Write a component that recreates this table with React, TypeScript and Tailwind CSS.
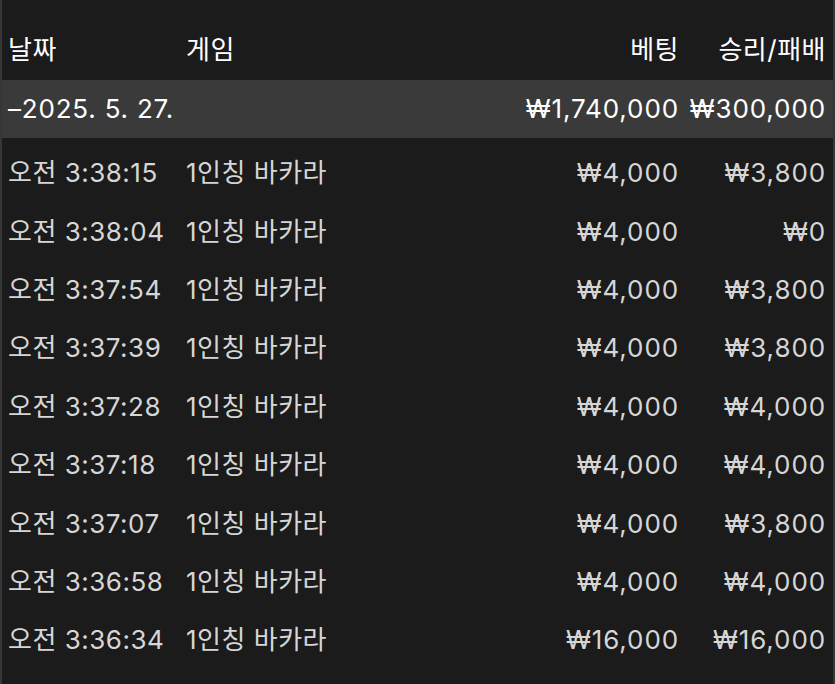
const rows = [
  { time: "오전 3:38:15", bet: "₩4,000", win: "₩3,800" },
  { time: "오전 3:38:04", bet: "₩4,000", win: "₩0" },
  { time: "오전 3:37:54", bet: "₩4,000", win: "₩3,800" },
  { time: "오전 3:37:39", bet: "₩4,000", win: "₩3,800" },
  { time: "오전 3:37:28", bet: "₩4,000", win: "₩4,000" },
  { time: "오전 3:37:18", bet: "₩4,000", win: "₩4,000" },
  { time: "오전 3:37:07", bet: "₩4,000", win: "₩3,800" },
  { time: "오전 3:36:58", bet: "₩4,000", win: "₩4,000" },
  { time: "오전 3:36:34", bet: "₩16,000", win: "₩16,000" },
];

const grid = "grid grid-cols-[178px_1fr_200px_147px] items-center pl-[6px] pr-[7px]";

export default function App() {
  return (
    <div
      className="flex h-[684px] w-[835px] overflow-hidden bg-[#1b1b1b] text-[26px] leading-none tracking-[0.5px]"
      style={{ fontFamily: 'Inter, "Noto Sans CJK KR", sans-serif' }}
    >
      <div className="w-[2px] shrink-0 bg-[#363636]" />
      <div className="flex-1 pt-5">
        <div className={`${grid} h-[60px] text-white`}>
          <span>날짜</span>
          <span>게임</span>
          <span className="text-right">베팅</span>
          <span className="text-right">승리/패배</span>
        </div>
        <div className={`${grid} h-[58px] bg-[#3a3a3a] text-white`}>
          <span className="col-span-2 tracking-[0.8px]">–2025. 5. 27.</span>
          <span className="text-right tracking-[0.9px]">₩1,740,000</span>
          <span className="text-right tracking-[0.9px]">₩300,000</span>
        </div>
        <div className="mt-[6px]">
          {rows.map((r) => (
            <div key={r.time} className={`${grid} h-[58.4px] text-[#d6d6d6]`}>
              <span>{r.time}</span>
              <span>1인칭 바카라</span>
              <span className="text-right tracking-[0.9px]">{r.bet}</span>
              <span className="text-right tracking-[0.9px]">{r.win}</span>
            </div>
          ))}
        </div>
      </div>
      <div className="w-[2px] shrink-0 bg-[#363636]" />
    </div>
  );
}
